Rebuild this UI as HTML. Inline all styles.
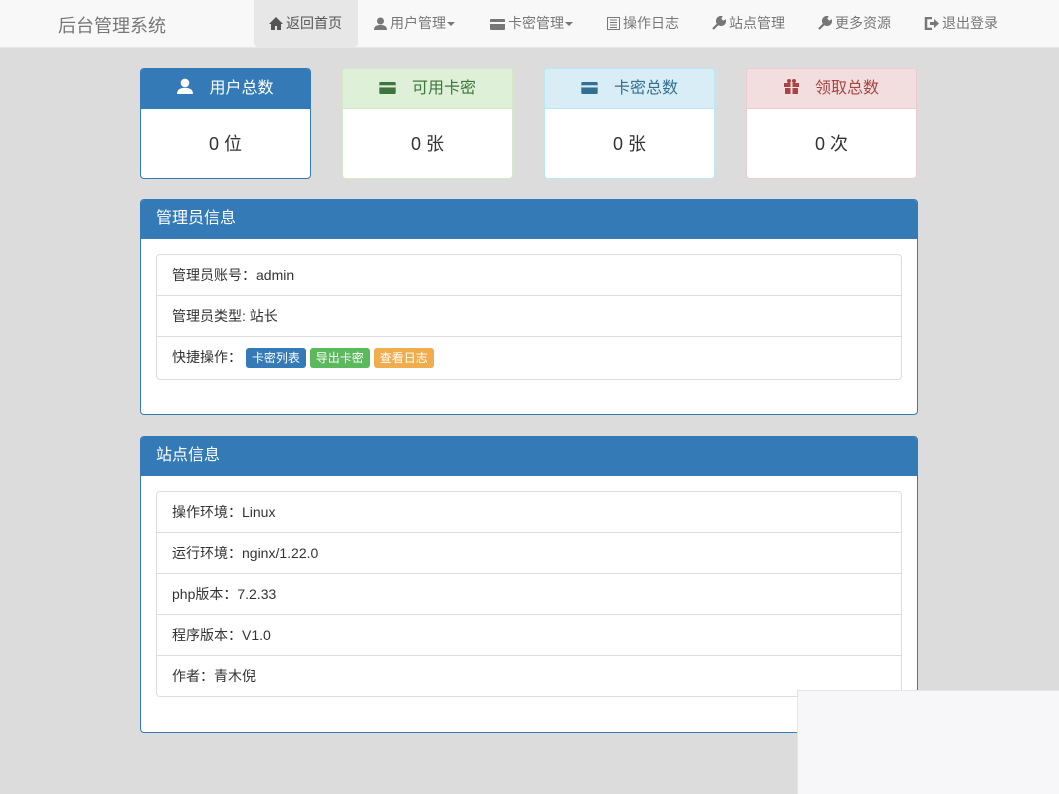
<!DOCTYPE html>
<html><head><meta charset="utf-8"><style>
*{box-sizing:border-box;margin:0;padding:0}
body{width:1059px;height:794px;overflow:hidden;background:#dcdcdc;font-family:"Liberation Sans","Noto Sans CJK SC",sans-serif;font-size:14px;color:#333;position:relative}
.nav{position:absolute;left:0;top:0;width:1059px;height:48px;background:#f8f8f8;border-bottom:1px solid #e7e7e7}
.brand{position:absolute;left:58px;top:12px;font-size:18px;color:#777}
.ni{position:absolute;top:0;height:47px;line-height:46px;color:#777;font-size:14px;padding:0 15px;white-space:nowrap}
.ni svg{vertical-align:-2px;margin-right:3px}
.act{background:#e7e7e7;border-radius:0 0 4px 4px}
.caret{display:inline-block;border-top:4px solid #777;border-left:4px solid transparent;border-right:4px solid transparent;vertical-align:middle;margin-left:1px}
.card{position:absolute;top:68px;width:171px;height:111px;border:1px solid;border-radius:4px;background:#fff;overflow:hidden}
.card .h{height:40px;line-height:40px;text-align:center;font-size:16px;border-bottom:1px solid}
.card .h svg{vertical-align:-1px;margin-right:16px}
.card .b{text-align:center;font-size:18px;line-height:70px}
.panel{position:absolute;left:140px;width:778px;border:1px solid #337ab7;border-radius:4px;background:#fff;overflow:hidden}
.panel .ph{height:39px;background:#337ab7;color:#fff;font-size:16px;line-height:38px;padding-left:15px}
.lg{margin:15px 15px 0;border:1px solid #ddd;border-radius:4px}
.li{height:41px;line-height:40px;padding-left:15px;border-top:1px solid #ddd;font-size:14px}
.li:first-child{border-top:0;height:40px}
.btn{display:inline-block;color:#fff;font-size:12px;line-height:20px;padding:0 6px;border-radius:3px;margin-right:0}
</style></head><body>
<div class="nav">
<div class="brand">后台管理系统</div>
<div class="ni act" style="left:254px;width:104px;color:#555"><svg width="14" height="13" viewBox="0 0 14 13"><path d="M7 0L0 7h2v6h4V9h2v4h4V7h2z" fill="#555"/></svg>返回首页</div>
<div class="ni" style="left:359px"><svg width="13" height="13" viewBox="0 0 13 13"><circle cx="6.5" cy="4" r="3.5" fill="#777"/><path d="M0 13c0-4 3-5 6.5-5S13 9 13 13z" fill="#777"/></svg>用户管理<span class="caret"></span></div>
<div class="ni" style="left:475px"><svg width="15" height="11" viewBox="0 0 15 11"><rect width="15" height="11" rx="1" fill="#777"/><rect y="3" width="15" height="2" fill="#f8f8f8"/></svg>卡密管理<span class="caret"></span></div>
<div class="ni" style="left:592px"><svg width="13" height="13" viewBox="0 0 13 13"><rect x=".5" y=".5" width="12" height="12" fill="none" stroke="#777"/><path d="M3 3h7M3 5.5h7M3 8h7M3 10.5h7" stroke="#777"/></svg>操作日志</div>
<div class="ni" style="left:697px"><svg width="14" height="14" viewBox="0 0 14 14"><path d="M1 13L8 6M9 1a4 4 0 1 0 4 4l-2 1-3-3z" stroke="#777" stroke-width="2.2" fill="#777"/></svg>站点管理</div>
<div class="ni" style="left:803px"><svg width="14" height="14" viewBox="0 0 14 14"><path d="M1 13L8 6M9 1a4 4 0 1 0 4 4l-2 1-3-3z" stroke="#777" stroke-width="2.2" fill="#777"/></svg>更多资源</div>
<div class="ni" style="left:909px"><svg width="15" height="13" viewBox="0 0 15 13"><path d="M8 1H2v11h6" stroke="#777" stroke-width="2.5" fill="none"/><path d="M6 5h4V2l5 4.5-5 4.5V8H6z" fill="#777"/></svg>退出登录</div>
</div>

<div class="card" style="left:140px;border-color:#337ab7"><div class="h" style="background:#337ab7;color:#fff;border-color:#337ab7"><svg width="16" height="16" viewBox="0 0 13 13"><circle cx="6.5" cy="4" r="3.5" fill="#fff"/><path d="M0 13c0-4 3-5 6.5-5S13 9 13 13z" fill="#fff"/></svg>用户总数</div><div class="b">0 位</div></div>
<div class="card" style="left:342px;border-color:#d6e9c6"><div class="h" style="background:#dff0d8;color:#3c763d;border-color:#d6e9c6"><svg width="17" height="12" viewBox="0 0 15 11"><rect width="15" height="11" rx="1" fill="#3c763d"/><rect y="3" width="15" height="2" fill="#dff0d8"/></svg>可用卡密</div><div class="b">0 张</div></div>
<div class="card" style="left:544px;border-color:#bce8f1"><div class="h" style="background:#d9edf7;color:#31708f;border-color:#bce8f1"><svg width="17" height="12" viewBox="0 0 15 11"><rect width="15" height="11" rx="1" fill="#31708f"/><rect y="3" width="15" height="2" fill="#d9edf7"/></svg>卡密总数</div><div class="b">0 张</div></div>
<div class="card" style="left:746px;border-color:#ebccd1"><div class="h" style="background:#f2dede;color:#a94442;border-color:#ebccd1"><svg width="15" height="15" viewBox="0 0 15 15"><rect x="0" y="4" width="15" height="4" fill="#a94442"/><rect x="1" y="9" width="13" height="6" fill="#a94442"/><rect x="6.5" y="4" width="2" height="11" fill="#f2dede"/><circle cx="5" cy="2" r="2" fill="#a94442"/><circle cx="10" cy="2" r="2" fill="#a94442"/></svg>领取总数</div><div class="b">0 次</div></div>

<div class="panel" style="top:199px;height:216px"><div class="ph">管理员信息</div>
<div class="lg">
<div class="li">管理员账号：admin</div>
<div class="li">管理员类型: 站长</div>
<div class="li" style="height:43px">快捷操作：&nbsp;<span class="btn" style="background:#337ab7">卡密列表</span> <span class="btn" style="background:#5cb85c">导出卡密</span> <span class="btn" style="background:#f0ad4e">查看日志</span></div>
</div></div>

<div class="panel" style="top:436px;height:297px"><div class="ph">站点信息</div>
<div class="lg">
<div class="li">操作环境：Linux</div>
<div class="li">运行环境：nginx/1.22.0</div>
<div class="li">php版本：7.2.33</div>
<div class="li">程序版本：V1.0</div>
<div class="li">作者：青木倪</div>
</div></div>

<div style="position:absolute;left:797px;top:690px;width:262px;height:104px;background:#f7f7f9;border-left:1px solid #e5e5e5;border-top:1px solid #e5e5e5"></div>
</body></html>
